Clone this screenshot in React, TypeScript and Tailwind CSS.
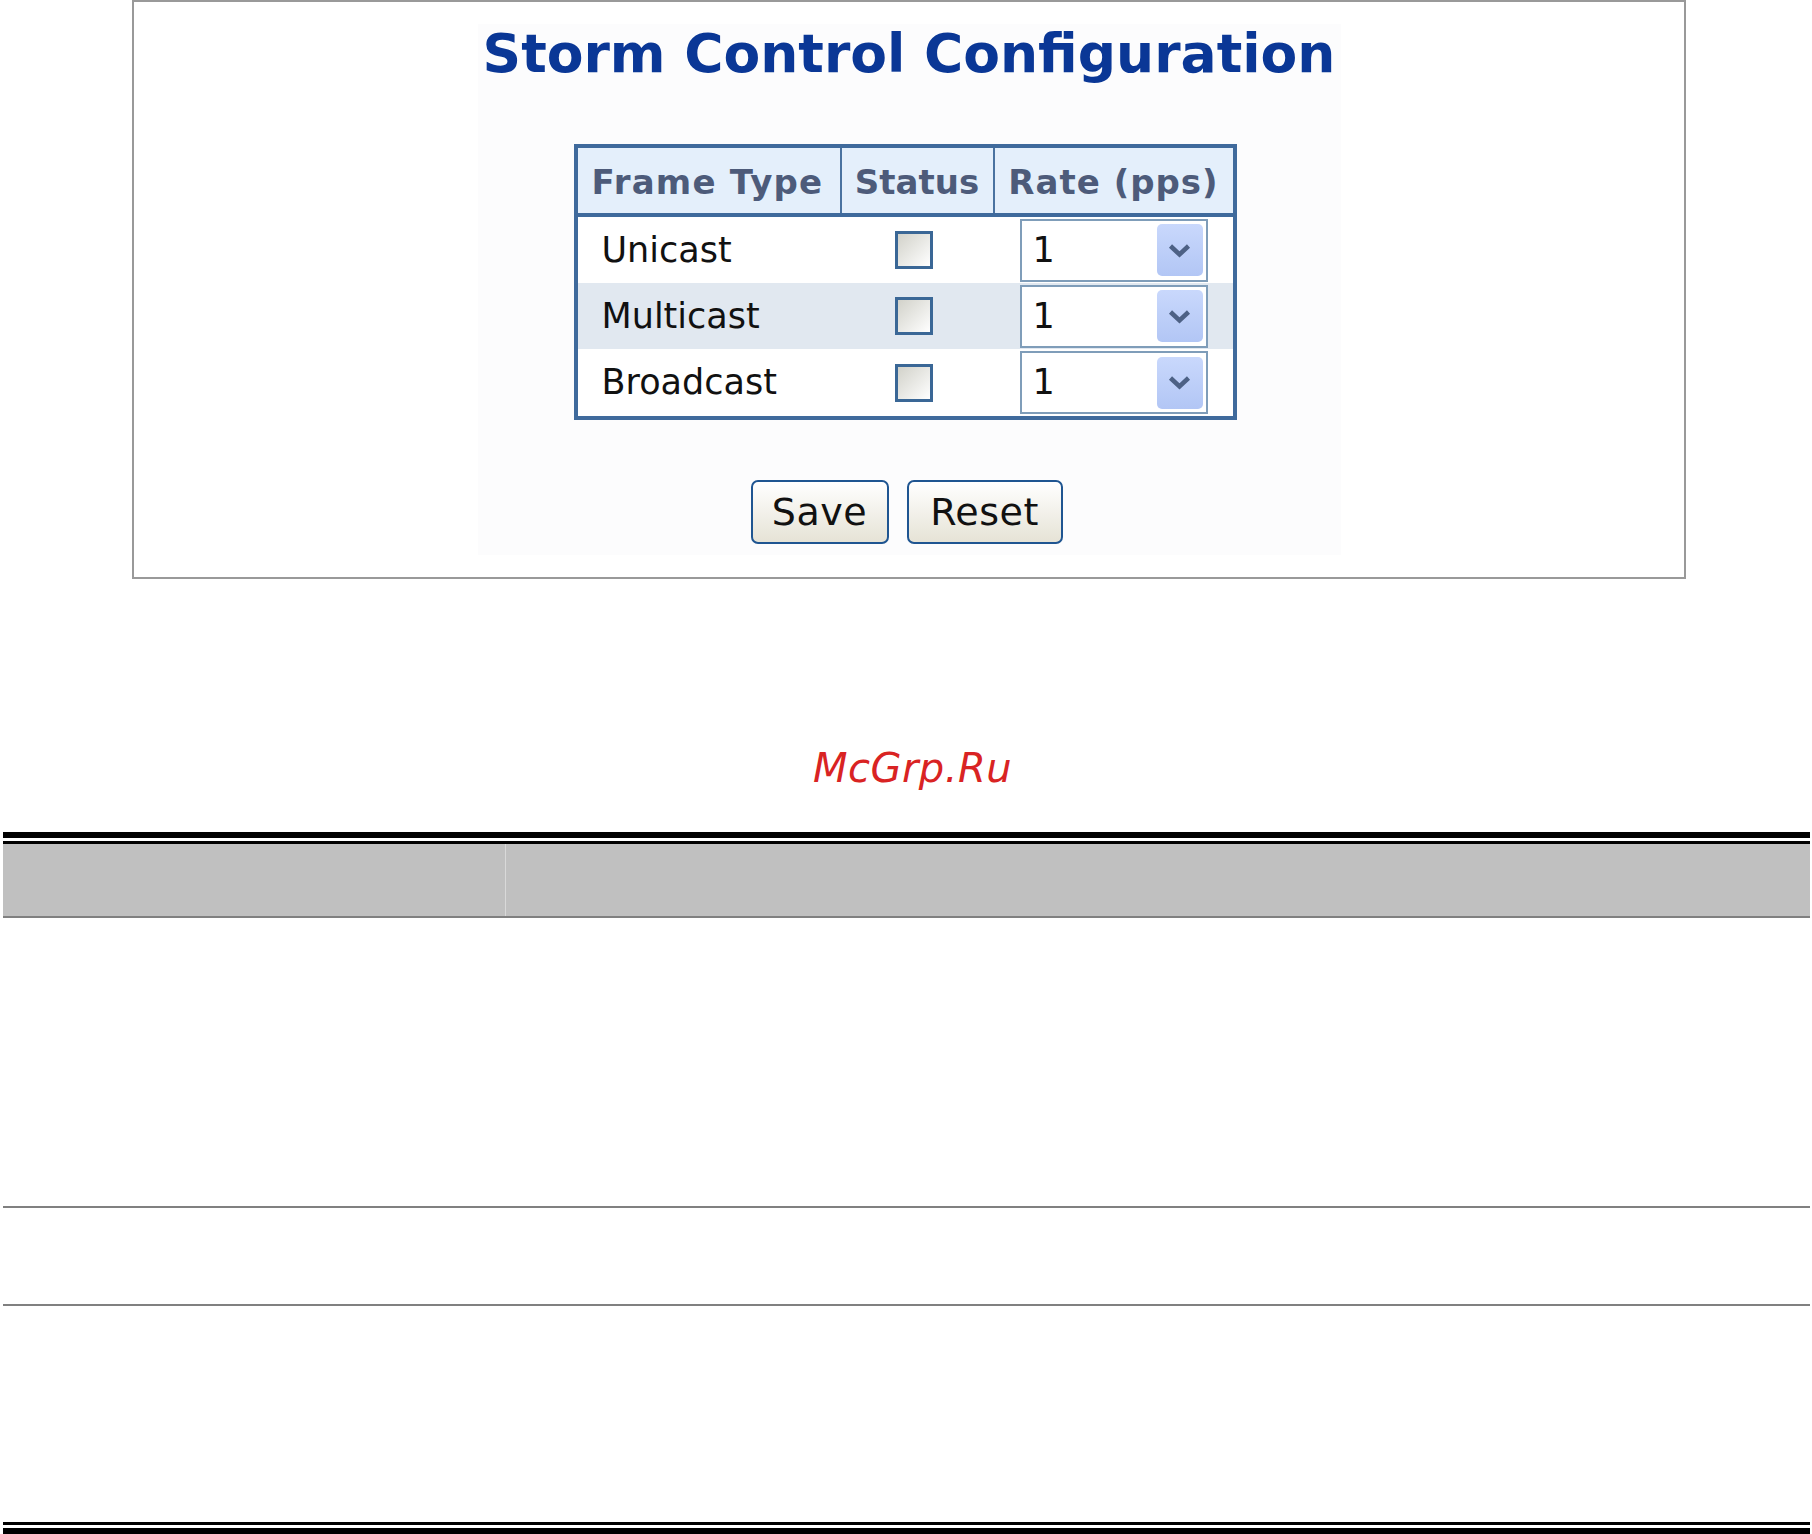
import React from 'react'

const rows = [
  { name: 'Unicast', shade: false, h: 'h-[66px]' },
  { name: 'Multicast', shade: true, h: 'h-[66px]' },
  { name: 'Broadcast', shade: false, h: 'h-[67px]' },
]

function RateSelect() {
  return (
    <div className="w-[188px] h-[63px] border-2 border-[#7f9db9] bg-white flex items-center justify-between">
      <span className="pl-[11px] text-[35px] text-[#111]">1</span>
      <div className="mr-[3px] w-[46px] h-[52px] rounded-[5px] bg-linear-to-b from-[#c9d8fc] to-[#b2c6f5] flex items-center justify-center">
        <svg width="23" height="15" viewBox="0 0 23 15">
          <path d="M2.5 3 L11.5 11.5 L20.5 3" fill="none" stroke="#4d6185" strokeWidth="4.5" />
        </svg>
      </div>
    </div>
  )
}

function StormTable() {
  return (
    <div className="w-[663px] border-4 border-[#3f6a9c] bg-white">
      <div className="h-[69px] flex bg-[#e4effb] border-b-4 border-[#3f6a9c] font-bold text-[34px] text-[#4d5b7a]">
        <div className="w-[264px] border-r-2 border-[#4a72a0] flex items-center pl-[14px] pt-[4px] tracking-[1.2px]">
          Frame Type
        </div>
        <div className="w-[153px] border-r-2 border-[#4a72a0] flex items-center justify-center pt-[4px]">
          Status
        </div>
        <div className="flex-1 flex items-center justify-center pt-[4px] tracking-[1px]">
          Rate (pps)
        </div>
      </div>

      {rows.map((r) => (
        <div
          key={r.name}
          className={`${r.h} flex items-center ${r.shade ? 'bg-[#e1e8f0]' : 'bg-white'}`}
        >
          <div className="w-[264px] pl-[24px] text-[35px] text-[#111]">{r.name}</div>
          <div className="w-[153px] flex justify-center pr-[8px]">
            <div className="w-[38px] h-[38px] border-[3px] border-[#3a6796] bg-linear-to-br from-[#d2d2ca] to-white"></div>
          </div>
          <div className="flex-1 flex justify-center">
            <RateSelect />
          </div>
        </div>
      ))}
    </div>
  )
}

function XpButton(props: { label: string; w: string }) {
  return (
    <button
      className={`${props.w} h-[64px] border-2 border-[#1f5591] rounded-[7px] bg-linear-to-b from-white to-[#e6e3d6] text-[38px] tracking-[0.5px] text-[#111] flex items-center justify-center`}
    >
      {props.label}
    </button>
  )
}

export default function App() {
  return (
    <div className="w-[1812px] h-[1534px] bg-white font-['DejaVu_Sans',sans-serif] overflow-hidden">
      <div className="ml-[132px] w-[1554px] h-[579px] border-2 border-[#999999] flex flex-col items-center">
        <div className="mt-[22px] w-[863px] h-[531px] bg-[#fcfcfd] flex flex-col items-center">
          <h1 className="text-[53.5px] leading-[60px] font-bold text-[#0a3796]">
            Storm Control Configuration
          </h1>
          <div className="mt-[60px] pr-[8px]">
            <StormTable />
          </div>
          <div className="mt-[60px] flex gap-[18px] pr-[5px]">
            <XpButton label="Save" w="w-[138px]" />
            <XpButton label="Reset" w="w-[156px]" />
          </div>
        </div>
      </div>

      <div className="mt-[165px] flex justify-center pl-[13px]">
        <span className="text-[40px] leading-[48px] italic text-[#d92323] tracking-[0.5px]">
          McGrp.Ru
        </span>
      </div>

      <div className="mt-[40px] ml-[3px] w-[1807px] flex flex-col">
        <div className="h-[6px] bg-black"></div>
        <div className="h-[3px] mt-[3px] bg-black"></div>
        <div className="h-[72px] flex bg-[#c0c0c0]">
          <div className="w-[503px] border-r border-[#d9d9d9]"></div>
          <div className="flex-1"></div>
        </div>
        <div className="h-[2px] bg-[#808080]"></div>
        <div className="h-[288px]"></div>
        <div className="h-[2px] bg-[#808080]"></div>
        <div className="h-[96px]"></div>
        <div className="h-[2px] bg-[#808080]"></div>
        <div className="h-[216px]"></div>
        <div className="h-[3px] bg-black"></div>
        <div className="h-[6px] mt-[3px] bg-black"></div>
      </div>
    </div>
  )
}
